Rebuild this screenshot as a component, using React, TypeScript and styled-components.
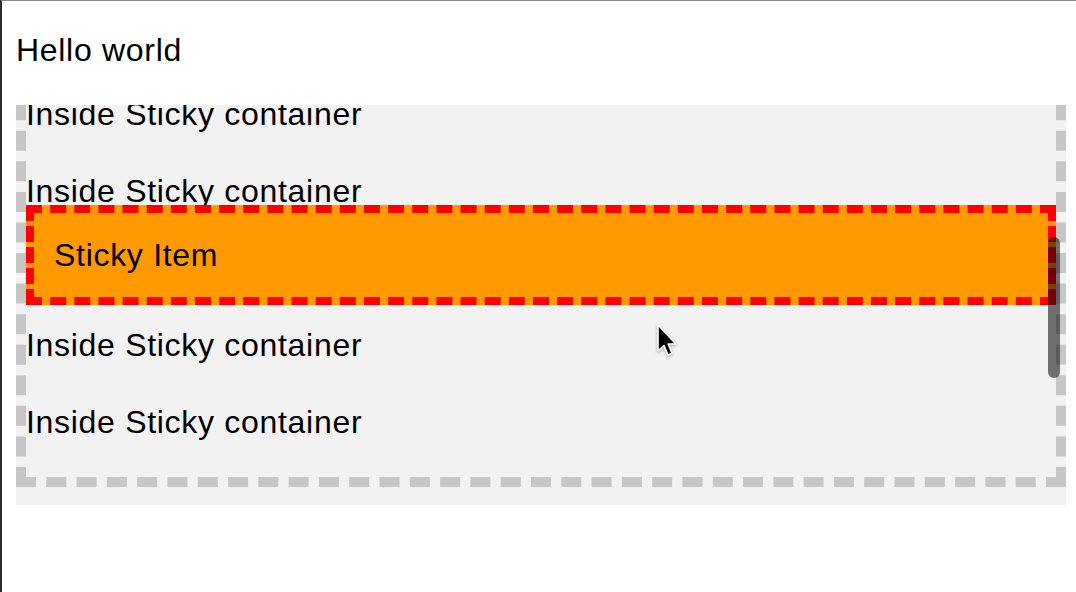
import React, { useLayoutEffect, useRef } from "react";
import styled, { createGlobalStyle } from "styled-components";

const GlobalStyle = createGlobalStyle`
  html, body {
    margin: 0;
    padding: 0;
    background: #ffffff;
  }
  body {
    font-family: "Liberation Sans", Arial, sans-serif;
    color: #000000;
  }
`;

const Frame = styled.div`
  position: relative;
  box-sizing: border-box;
  min-height: 100vh;
  display: flex;
  flex-direction: column;
  align-items: flex-start;
  gap: 32px;
  border-top: 1px solid #8a8a8a;
  border-left: 2px solid #2e2e2e;
  padding: 27px 10px 0 14px;
  overflow: hidden;
`;

const Title = styled.p`
  margin: 0;
  font-size: 32px;
  line-height: 45px;
  letter-spacing: 0.7px;
`;

const ScrollWrap = styled.div`
  position: relative;
  width: 1050px;
  height: 400px;
`;

const Scroller = styled.div`
  height: 100%;
  overflow-y: auto;
  background: #f2f2f2;
  scrollbar-width: none;
  &::-webkit-scrollbar {
    display: none;
  }
`;

const ScrollContent = styled.div`
  padding-bottom: 412px;
`;

const DashedBox = styled.div`
  display: flex;
  flex-direction: column;
  gap: 32px;
  padding: 32px 0;
  border: 10px dashed #c6c6c6;
`;

const Row = styled.p`
  margin: 0;
  font-size: 32px;
  line-height: 45px;
  letter-spacing: 0.7px;
`;

const StickyItem = styled.div`
  position: sticky;
  top: 100px;
  background: #ff9900;
  border: 8px dashed #ff0000;
  padding: 20px;
  font-size: 32px;
  line-height: 44px;
  letter-spacing: 0.7px;
`;

const Thumb = styled.div`
  position: absolute;
  left: 1032px;
  top: 132px;
  width: 12px;
  height: 141px;
  border-radius: 6px;
  background: rgba(0, 0, 0, 0.54);
  pointer-events: none;
`;

const Cursor = styled.svg`
  position: absolute;
  left: 653px;
  top: 322px;
  width: 24px;
  height: 35px;
  filter: drop-shadow(0 1px 1.5px rgba(0, 0, 0, 0.35));
  pointer-events: none;
`;

const rowsBefore = 2;
const rowsAfter = 5;

export default function App() {
  const scrollerRef = useRef<HTMLDivElement>(null);
  const boxRef = useRef<HTMLDivElement>(null);

  useLayoutEffect(() => {
    const s = scrollerRef.current;
    const b = boxRef.current;
    if (!s || !b) return;
    const delta =
      b.getBoundingClientRect().bottom - s.getBoundingClientRect().top - 382;
    s.scrollTop += delta;
  }, []);

  return (
    <Frame>
      <GlobalStyle />
      <Title>Hello world</Title>
      <ScrollWrap>
        <Scroller ref={scrollerRef}>
          <ScrollContent>
            <DashedBox ref={boxRef}>
              {Array.from({ length: rowsBefore }).map((_, i) => (
                <Row key={`b${i}`}>Inside Sticky container</Row>
              ))}
              <StickyItem>Sticky Item</StickyItem>
              {Array.from({ length: rowsAfter }).map((_, i) => (
                <Row key={`a${i}`}>Inside Sticky container</Row>
              ))}
            </DashedBox>
          </ScrollContent>
        </Scroller>
        <Thumb />
      </ScrollWrap>
      <Cursor viewBox="0 0 24 35">
        <path
          d="M3 2 L3 28 L9 22.5 L13 32 L17 30.3 L13.2 21 L21 21 Z"
          fill="#000000"
          stroke="#ffffff"
          strokeWidth="1.6"
          strokeLinejoin="round"
        />
      </Cursor>
    </Frame>
  );
}
